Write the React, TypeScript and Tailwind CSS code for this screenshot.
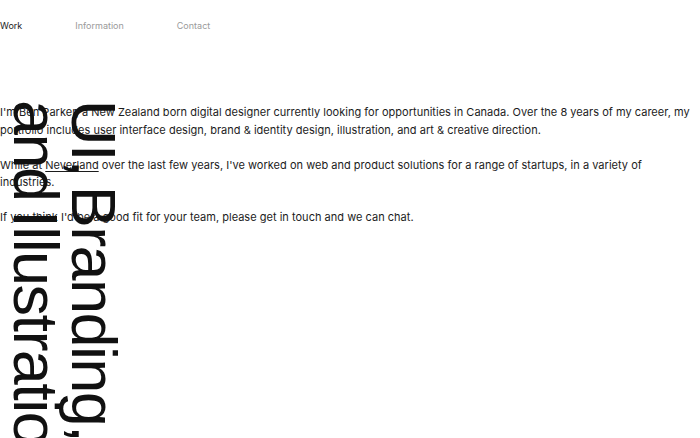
import React from "react"

const navLinks = [
  { label: "Work", active: true },
  { label: "Information", active: false },
  { label: "Contact", active: false },
]

export default function App() {
  return (
    <div
      className="relative h-[438px] w-full overflow-hidden bg-white text-[#1c1c1c]"
      style={{ fontFamily: "Inter, 'Liberation Sans', Arial, sans-serif" }}
    >
      {/* Top nav */}
      <nav className="flex gap-[53px] pt-[20px] text-[9px] leading-[12px]">
        {navLinks.map((link) => (
          <a
            key={link.label}
            href="#"
            className={link.active ? "text-[#1c1c1c]" : "text-[#9a9a9a]"}
          >
            {link.label}
          </a>
        ))}
      </nav>

      {/* About copy */}
      <section className="mt-[72px] w-[695px] text-[11px] leading-[17.5px] tracking-[0.02px]">
        <p className="mb-[17.5px]">
          I'm Ben Parker, a New Zealand born digital designer currently looking for opportunities in Canada. Over the 8 years of my career, my portfolio includes user interface design, brand &amp; identity design, illustration, and art &amp; creative direction.
        </p>
        <p className="mb-[17.5px]">
          While at{" "}
          <a href="#" className="underline underline-offset-2">
            Neverland
          </a>{" "}
          over the last few years, I've worked on web and product solutions for a range of startups, in a variety of industries.
        </p>
        <p>If you think I'd be a good fit for your team, please get in touch and we can chat.</p>
      </section>

      {/* Sideways display heading, sits over the copy */}
      <h1
        className="absolute left-[7px] top-[100px] whitespace-nowrap text-[63px] font-normal leading-[58px] tracking-[-0.025em] [word-spacing:-6px] text-[#111] [writing-mode:vertical-rl]"
        style={{ fontFamily: "'Liberation Sans', Arial, sans-serif" }}
      >
        UI, Branding,
        <br />
        and Illustration
      </h1>
    </div>
  )
}
